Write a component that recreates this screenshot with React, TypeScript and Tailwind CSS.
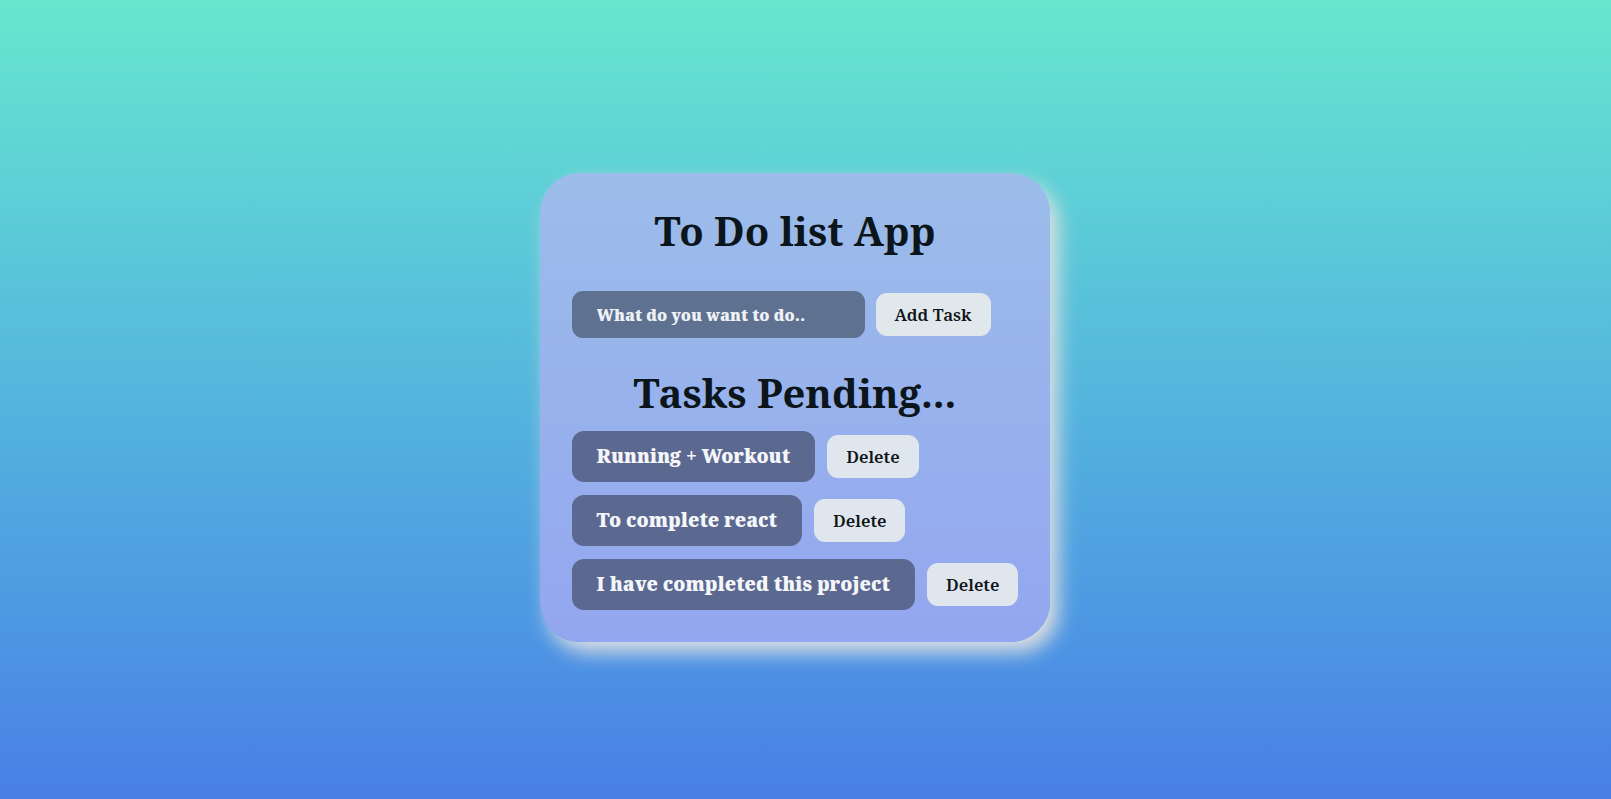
import React from "react";

const tasks = ["Running + Workout", "To complete react", "I have completed this project"];

export default function App() {
  return (
    <div
      className="h-screen w-full overflow-hidden bg-gradient-to-b from-[#67e7ce] to-[#4a7fe6] flex justify-center items-start pt-[173px] pr-[21px]"
      style={{ fontFamily: '"Noto Serif", "DejaVu Serif", "Liberation Serif", serif' }}
    >
      <div className="rounded-[40px] px-8 pt-[28px] pb-[32px] bg-gradient-to-b from-[#9cbdea] to-[#93a6ef] shadow-[8px_10px_20px_rgba(232,228,226,0.95)]">
        <h1 className="text-center text-[40px] font-bold leading-normal text-[#0b151a] mb-[30px]">To Do list App</h1>
        <div className="flex items-center gap-[11px]">
          <input
            className="w-[293px] h-[47px] rounded-[11px] bg-[#5e7191] pl-[25px] text-[16px] font-black text-white placeholder:text-[#eef1f5] outline-none"
            placeholder="What do you want to do.."
          />
          <button className="h-[43px] px-[19px] rounded-[11px] bg-[#e0e8ec] text-[17px] font-semibold text-[#101418]">Add Task</button>
        </div>
        <h2 className="text-center text-[40px] font-bold leading-normal text-[#0b151a] mt-[25px] mb-[8px]">Tasks Pending...</h2>
        <div className="flex flex-col gap-[13px]">
          {tasks.map((t) => (
            <div key={t} className="flex items-center gap-[12px]">
              <div className="h-[51px] flex items-center px-[25px] rounded-[12px] bg-[#5b6890] text-[19px] font-black text-[#f4f6fa]">{t}</div>
              <button className="h-[43px] px-[19px] rounded-[11px] bg-[#dfe6ee] text-[17px] font-semibold text-[#101418]">Delete</button>
            </div>
          ))}
        </div>
      </div>
    </div>
  );
}
